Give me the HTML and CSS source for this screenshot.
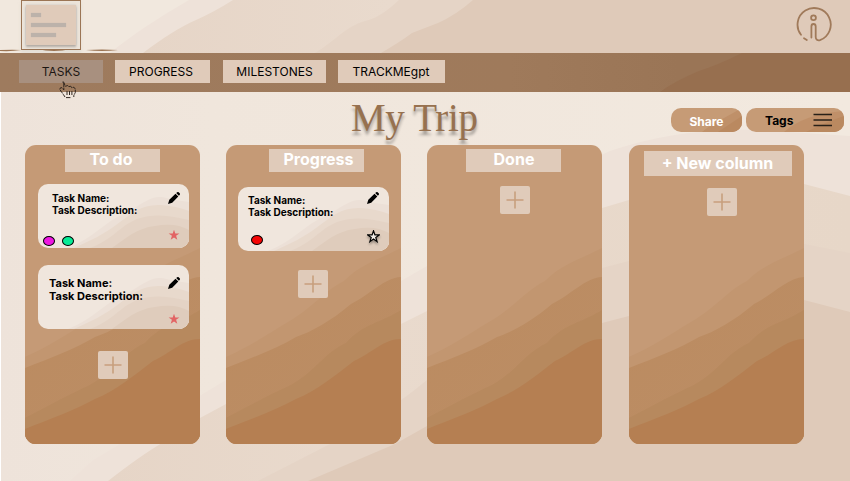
FILE: index.html
```html
<!DOCTYPE html>
<html lang="en">
<head>
<meta charset="utf-8">
<title>My Trip</title>
<link rel="stylesheet" href="styles.css">
</head>
<body>
<svg class="defs" width="0" height="0" aria-hidden="true">
  <defs>
    <linearGradient id="g1" x1="0" y1="0" x2="1" y2="1"><stop offset="0" stop-color="#bb8b60"/><stop offset="1" stop-color="#bc8e66"/></linearGradient>
    <symbol id="dunes" viewBox="0 0 175 299" preserveAspectRatio="none">
      <rect width="175" height="299" fill="#c59a76"/>
      <path fill="#c29670" d="M0 212C25 201 40 190 62 177C88 162 98 146 118 136C135 119 150 116 175 103V299H0Z"/>
      <path fill="url(#g1)" d="M0 223C25 213 50 204 70 192C85 187 105 176 125 159C145 149 158 133 175 132V299H0Z"/>
      <path fill="#b7895e" d="M0 273C25 260 45 249 65 240C90 226 98 208 120 198C138 178 155 178 175 165V299H0Z"/>
      <path fill="#b57f52" d="M0 284C25 274 50 265 70 254C90 246 110 230 128 216C146 208 158 194 175 194V299H0Z"/>
    </symbol>
    <symbol id="sand" viewBox="0 0 151 64" preserveAspectRatio="none">
      <rect width="151" height="64" fill="#f0e6dd"/>
      <path fill="#ece0d7" d="M30 64C56 54 66 38 86 30C104 20 112 12 124 13Q138 17 151 18V64Z"/>
      <path fill="#e8d9cc" d="M36 64C54 56 66 50 78 41C94 29 104 20 123 21Q138 22 151 27V64Z"/>
      <path fill="#e4d3c5" d="M52 64C74 56 82 42 99 35C119 28 136 33 151 36V64Z"/>
      <path fill="#dfccbc" d="M74 64C88 54 99 44 117 42Q137 38 151 46V64Z"/>
    </symbol>
    <symbol id="pencil" viewBox="0 0 24 24">
      <path d="M0 24L2.6 15.6L15 3.4L20.6 9L8.4 21.4ZM16.4 2.2L18.4 .5Q20 -.6 21.4 .7L23.3 2.6Q24.6 4 23.5 5.5L21.8 7.6Z"/>
    </symbol>
    <symbol id="star" viewBox="0 0 24 24">
      <path d="M12 1.5L14.6 9H22.8L16.2 13.7L18.6 21.5L12 16.8L5.4 21.5L7.8 13.7L1.2 9H9.4Z"/>
    </symbol>
  </defs>
</svg>
<div class="app">
  <svg class="backdrop" viewBox="0 0 850 481" aria-hidden="true">
    <defs>
      <linearGradient id="soft" x1="0" y1="0" x2="1" y2="0"><stop offset="0" stop-color="#e6d5c7"/><stop offset=".35" stop-color="#e9dacd"/><stop offset="1" stop-color="#e7d7c8"/></linearGradient>
      <linearGradient id="base" x1="0" y1="0" x2="1" y2="0"><stop offset="0" stop-color="#eee3da"/><stop offset=".25" stop-color="#f0e6dc"/><stop offset="1" stop-color="#f2e9df"/></linearGradient>
    </defs>
    <rect width="850" height="481" fill="url(#base)"/>
    <path fill="#eee2d9" d="M70 481L92 461L125 441L226 380L401 281L427 266Q520 190 610 151Q680 127 760 130L850 136V481Z"/>
    <path fill="url(#soft)" d="M108 481Q140 456 162 443L200 418L226 404L401 324L427 311Q520 250 602 208L629 200Q740 165 804 184L850 196V481Z"/>
    <path fill="#e5d4c6" d="M258 481L330 444Q385 415 427 380Q520 305 602 268L629 261Q730 230 804 244L850 253V481Z"/>
    <path fill="#dfcab9" d="M308 481L395 444L427 426Q520 360 602 323L629 316Q730 280 804 300L850 312V481Z"/>
    <rect y="92" width="1" height="389" fill="#fff"/>
    <rect width="850" height="53" fill="#f1e8de"/>
    <path fill="#eee2d9" d="M110 53C132 35 158 18 189 0H850V53Z"/>
    <path fill="url(#soft)" d="M143 53C163 38 180 27 196 20Q214 12 233 0H850V53Z"/>
    <path fill="#e5d4c6" d="M315 53C335 41 345 27 365 21Q380 18 399 0H850V53Z"/>
    <path fill="#dfcab9" d="M381 53Q400 42 412 33L438 23Q456 15 473 0H850V53Z"/>
  </svg>

  <header class="top">
    <div class="logo">
      <div class="logo-note"><i class="line short"></i><i class="line long"></i><i class="line mid"></i></div>
    </div>
    <svg class="swashes" width="120" height="5" viewBox="0 0 120 5"><path fill="#9b7453" d="M0 1Q14 .6 21 1Q12 2.6 0 2ZM37 0H71Q54 4 37 0ZM86 1Q102 .2 118 1Q102 3 86 1Z"/></svg>
    <svg class="info" width="36" height="36" viewBox="0 0 36 36" fill="none" stroke="#a07a5a" stroke-width="1.8" stroke-linecap="round">
      <path d="M5 27.8A16.6 16.6 0 1 1 24 33.2C21.5 34 19.7 32.5 19.7 30V19.5Q19.7 17 17.5 17Q15.4 17 15.4 19.5V30.5M8 31.2L10.8 33"/>
      <circle cx="17.5" cy="10.7" r="2.4"/>
    </svg>
  </header>

  <nav class="tabs">
    <svg class="nav-bg" viewBox="0 0 850 39" preserveAspectRatio="none"><path fill="#976f4f" d="M660 39Q675 28 699 18Q718 12 742 0H850V39Z"/></svg>
    <a class="tab active">TASKS</a>
    <a class="tab progress">PROGRESS</a>
    <a class="tab miles">MILESTONES</a>
    <a class="tab gpt">TRACKMEgpt</a>
    <svg class="cursor" width="19" height="19" viewBox="0 0 19 19" fill="none" stroke="#30261f" stroke-width="1" stroke-dasharray="4 .6">
      <path d="M6 16L4.3 13.4L.8 8.5Q.8 6.2 3 6.7L4.8 9V2Q4.6 .3 3.4 1.2M4.5 .8L6.4 5.3L8.7 4.5L9.7 5.8L11.7 5.2L12.7 6.7L14.9 6.2L16.3 8V11.5L14.8 14.5V16M8 10V14M10.5 10V14M12.9 10V14M7 16.6H12"/>
    </svg>
  </nav>

  <section class="titlebar">
    <h1>My Trip</h1>
    <div class="actions">
      <button class="pill share"><svg class="pill-bg" viewBox="0 0 71 24"><path fill="#bf9069" d="M31 24Q42 15 53 10L71 0V24Z"/><path fill="#ba8960" d="M47 24L71 8V24Z"/></svg><span>Share</span></button>
      <button class="pill tags"><svg class="pill-bg" viewBox="0 0 98 24"><path fill="#c09069" d="M38 24Q58 6 98 3V24Z"/><path fill="#ba8960" d="M60 24Q80 14 98 8V24Z"/></svg><span>Tags</span>
        <svg width="20" height="14" viewBox="0 0 20 14" stroke="#282018" stroke-width="1.4"><path d="M.5 1.5H19M.5 7H19M.5 12.5H19"/></svg>
      </button>
    </div>
  </section>

  <main class="board">
    <section class="column todo">
      <svg class="fill"><use href="#dunes"/></svg>
      <h2><span>To do</span></h2>
      <article class="card">
        <svg class="fill"><use href="#sand"/></svg>
        <p>Task Name:<br>Task Description:</p>
        <svg class="edit"><use href="#pencil"/></svg>
        <div class="dots"><i class="dot magenta"></i><i class="dot green"></i></div>
        <svg class="star"><use href="#star"/></svg>
      </article>
      <article class="card large">
        <svg class="fill"><use href="#sand"/></svg>
        <p>Task Name:<br>Task Description:</p>
        <svg class="edit"><use href="#pencil"/></svg>
        <svg class="star"><use href="#star"/></svg>
      </article>
      <button class="add"><svg viewBox="0 0 18 18"><path d="M9 .5V17.5M.5 9H17.5"/></svg></button>
    </section>
    <section class="column doing">
      <svg class="fill"><use href="#dunes"/></svg>
      <h2><span>Progress</span></h2>
      <article class="card">
        <svg class="fill"><use href="#sand"/></svg>
        <p>Task Name:<br>Task Description:</p>
        <svg class="edit"><use href="#pencil"/></svg>
        <div class="dots"><i class="dot red"></i></div>
        <svg class="star empty"><use href="#star"/></svg>
      </article>
      <button class="add"><svg viewBox="0 0 18 18"><path d="M9 .5V17.5M.5 9H17.5"/></svg></button>
    </section>
    <section class="column done">
      <svg class="fill"><use href="#dunes"/></svg>
      <h2><span>Done</span></h2>
      <button class="add"><svg viewBox="0 0 18 18"><path d="M9 .5V17.5M.5 9H17.5"/></svg></button>
    </section>
    <section class="column new">
      <svg class="fill"><use href="#dunes"/></svg>
      <h2><span>+ New column</span></h2>
      <button class="add"><svg viewBox="0 0 18 18"><path d="M9 .5V17.5M.5 9H17.5"/></svg></button>
    </section>
  </main>
</div>
</body>
</html>
```
FILE: styles.css
```css
* { box-sizing: border-box; }
body { margin: 0; font-family: Inter, "Liberation Sans", sans-serif; color: #000; }
h1, h2, p { margin: 0; }
button { border: 0; padding: 0; font: inherit; }
svg { display: block; flex: none; }
.defs { position: absolute; }
.app { position: relative; width: 850px; height: 481px; overflow: hidden; isolation: isolate; }
.backdrop { position: absolute; inset: 0; width: 850px; height: 481px; z-index: -1; }

.top { position: relative; height: 53px; display: flex; justify-content: space-between; padding: 0 18px 0 21px; }
.logo { width: 60px; height: 50px; border: 1px solid #9b7555; background: #ece4da; padding: 4px; box-shadow: 0 3px 3px #d8d5cc88; }
.logo-note { width: 50px; height: 40px; background: #e0cbba; padding: 8px 5px; display: flex; flex-direction: column; gap: 6px; box-shadow: 0 2px 2px #8c867f88, 0 0 2px #aaa8; }
.line { display: block; height: 4px; background: #bcb2aa; box-shadow: 0 0 1px #b5b1ad; }
.short { width: 10px; }
.long { width: 35px; }
.mid { width: 25px; }
.swashes { position: absolute; left: 0; top: 49px; }
.info { margin-top: 7px; }

.tabs { position: relative; height: 39px; display: flex; align-items: flex-start; padding: 7px 0 0 19px; background: linear-gradient(90deg, #9e7b5e, #9f7a5b 60%, #9a7556 80%); }
.nav-bg { position: absolute; inset: 0; width: 100%; height: 100%; }
.tab { position: relative; height: 23px; line-height: 23px; text-align: center; background: #e0cbba; font-size: 12px; }
.active { width: 84px; background: #a8907f; margin-right: 12px; color: #1c1612; }
.progress { width: 95px; padding-right: 3px; margin-right: 13px; }
.miles { width: 103px; margin-right: 12px; }
.gpt { width: 107px; padding-right: 1px; }
.cursor { position: absolute; left: 59px; top: 28px; z-index: 2; }

.titlebar { height: 53px; display: grid; grid-template-columns: 351px 1fr auto; padding-right: 6px; }
h1 { grid-column: 2; font: 400 39px/51px "Liberation Serif", serif; letter-spacing: -.35px; color: #97714f; text-shadow: 0 4px 3px #0005; }
.actions { display: flex; gap: 4px; padding-top: 16px; }
.pill { position: relative; height: 24px; border-radius: 10px; background: #c69b76; overflow: hidden; display: flex; align-items: center; font-weight: 700; font-size: 12px; }
.pill-bg { position: absolute; inset: 0; width: 100%; height: 100%; }
.pill span, .pill-bg + span + svg { position: relative; }
.share { width: 71px; justify-content: center; color: #fff; padding-top: 3px; }
.tags { width: 98px; padding: 0 11px 0 19px; justify-content: space-between; }

.board { display: grid; grid-template-columns: 175px 175px 176px 175px; gap: 26px; padding-left: 25px; }
.column { position: relative; width: 175px; height: 299px; border-radius: 11px; overflow: hidden; display: flex; flex-direction: column; align-items: flex-start; padding-top: 4px; }
.fill { position: absolute; inset: 0; width: 100%; height: 100%; }
h2 { position: relative; width: 95px; height: 23px; background: #e0cbba; color: #fff; font-size: 16px; font-weight: 700; line-height: 21px; text-align: center; white-space: nowrap; }
.todo h2 { margin-left: 40px; padding-right: 3px; }
.doing h2 { margin-left: 43px; padding-left: 4px; }
.done h2 { margin-left: 39px; padding-left: 1px; }
.new { padding-top: 6px; }
.new h2 { width: 148px; height: 25px; line-height: 25px; margin-left: 14.5px; }

.card { position: relative; width: 151px; height: 64px; border-radius: 10px; overflow: hidden; margin: 12px 0 0 13px; }
.card p { position: relative; padding: 8px 0 0 14px; font-size: 10px; line-height: 12px; font-weight: 700; white-space: nowrap; }
.card.large { margin-top: 17px; }
.card.large p { padding: 12px 0 0 11px; font-size: 11px; line-height: 13px; }
.doing .card { margin: 15px 0 0 12px; }
.doing .card p { padding: 7px 0 0 10px; }
.edit { position: absolute; width: 12px; height: 12px; right: 9px; top: 8px; }
.large .edit { top: 12px; }
.doing .edit { top: 5px; right: 10px; }
.star { position: absolute; width: 12px; height: 12px; right: 9px; top: 45px; fill: #e26464; }
.large .star { top: 48px; }
.star.empty { top: 43px; right: 9px; width: 13px; height: 13px; fill: #f3eee9; stroke: #000; stroke-width: 2.2; overflow: visible; filter: drop-shadow(0 2px 1px #0005); }
.dots { position: absolute; left: 5px; top: 52px; display: flex; gap: 7px; }
.doing .dots { left: 13px; top: 48px; }
.dot { width: 12px; height: 10px; border: 1px solid #000; border-radius: 50%; }
.magenta { background: #ee17e2; }
.green { background: #07eb96; }
.red { background: #f50505; }

.add { position: relative; width: 30px; height: 28px; border-radius: 2px; background: #e0cbba; display: grid; place-items: center; }
.add svg { width: 18px; height: 18px; stroke: #c79f7d; stroke-width: 1.6; }
.todo .add { margin: 22px 0 0 72.5px; }
.doing .add { margin: 19px 0 0 71.5px; }
.done .add { margin: 14px 0 0 72.5px; }
.new .add { margin: 12px 0 0 77.5px; }
```
